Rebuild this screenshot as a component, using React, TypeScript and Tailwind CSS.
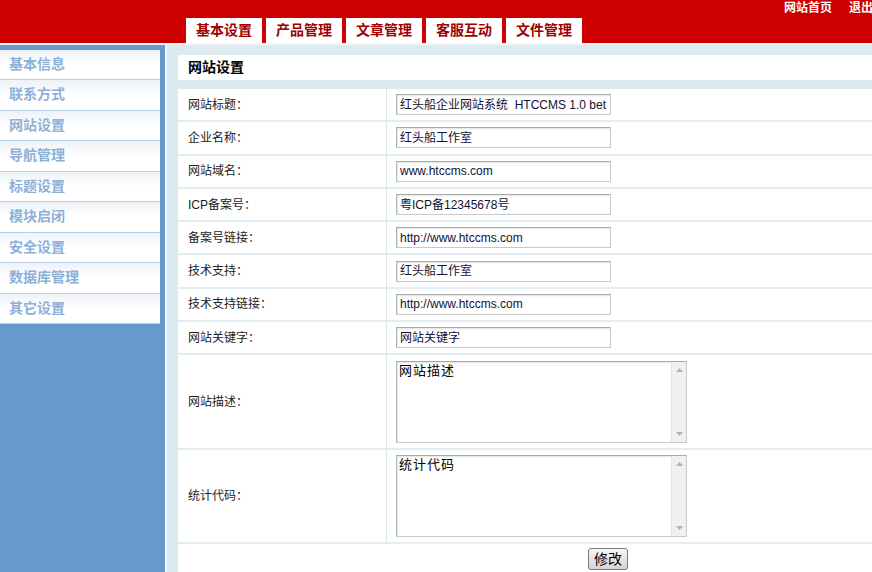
import React from "react";

const tabs = ["基本设置", "产品管理", "文章管理", "客服互动", "文件管理"];
const side = ["基本信息", "联系方式", "网站设置", "导航管理", "标题设置", "模块启闭", "安全设置", "数据库管理", "其它设置"];
const rows: [string, string][] = [
  ["网站标题：", "红头船企业网站系统  HTCCMS 1.0 bet"],
  ["企业名称：", "红头船工作室"],
  ["网站域名：", "www.htccms.com"],
  ["ICP备案号：", "粤ICP备12345678号"],
  ["备案号链接：", "http://www.htccms.com"],
  ["技术支持：", "红头船工作室"],
  ["技术支持链接：", "http://www.htccms.com"],
  ["网站关键字：", "网站关键字"],
];

function FakeTextarea({ text }: { text: string }) {
  return (
    <div className="flex w-[291px] h-[82px] border border-[#c9c9c9] border-t-[#aaaaaa] border-l-[#b5b5b5] bg-white shadow-[inset_1px_1px_2px_#e2e2e2]">
      <div className="flex-1 px-[2px] pt-[1px] text-[13px] leading-[16px] tracking-[1px] text-black">{text}</div>
      <div className="w-[15px] bg-[#f0f0f0] border-l border-[#e4e4e4] flex flex-col justify-between items-center py-[6px]">
        <svg width="7" height="4" viewBox="0 0 7 4"><path d="M0 4 L3.5 0 L7 4 Z" fill="#b0b0b0" /></svg>
        <svg width="7" height="4" viewBox="0 0 7 4"><path d="M0 0 L3.5 4 L7 0 Z" fill="#b0b0b0" /></svg>
      </div>
    </div>
  );
}

export default function App() {
  const font = { fontFamily: '"Liberation Sans", Arial, "Noto Sans CJK SC", sans-serif' };
  return (
    <div className="h-screen overflow-hidden flex flex-col bg-white" style={font}>
      {/* header */}
      <div className="h-[43px] bg-[#cc0000] flex flex-col shrink-0">
        <div className="h-[18px] flex justify-end items-center gap-[17px] mr-[-1px] text-[12px] font-bold text-white leading-none pb-[3px]">
          <span>网站首页</span>
          <span>退出</span>
        </div>
        <div className="flex gap-[4px] ml-[186px] h-[25px]">
          {tabs.map((t) => (
            <div key={t} className="w-[76px] h-[25px] bg-white flex items-center justify-center text-[14px] font-bold text-[#a00000]">
              {t}
            </div>
          ))}
        </div>
      </div>
      <div className="h-[2px] bg-[#eef4f8] shrink-0" />
      {/* body */}
      <div className="flex flex-1 min-h-0">
        <div className="w-[165px] bg-[#6699cc] pt-[5px] shrink-0">
          <div className="w-[160px]">
            {side.map((s, i) => (
              <div
                key={s}
                className={`${i === 0 ? "h-[30px]" : "h-[30.5px]"} border-b border-[#b8d1ea] bg-gradient-to-b from-[#edf2f7] via-white to-white flex items-center pl-[9px] text-[14px] font-bold text-[#8cb0d8]`}
              >
                {s}
              </div>
            ))}
          </div>
        </div>
        <div className="w-[2px] bg-[#f4f7f9] shrink-0" />
        <div className="flex-1 bg-[#dcebf0] pl-[11px] pt-[10px] overflow-hidden">
          <div className="w-[860px]">
            <div className="h-[25px] bg-white flex items-center pl-[10px] text-[14px] font-bold text-black">网站设置</div>
            <div className="h-[9px]" />
            <div className="bg-white">
              {rows.map(([l, v]) => (
                <div key={l} className="h-[33.3px] flex border-b-2 border-[#e3eef2]">
                  <div className="w-[209px] border-r border-[#d8e7ee] flex items-center pl-[10px] text-[12px] text-[#222]">{l}</div>
                  <div className="flex items-center pl-[9px]">
                    <div className="w-[215px] h-[21px] border border-[#c9c9c9] border-t-[#aaaaaa] border-l-[#b5b5b5] shadow-[inset_1px_1px_2px_#e2e2e2] flex items-center pl-[3px] overflow-hidden whitespace-pre text-[12px] text-[#111133]">
                      {v}
                    </div>
                  </div>
                </div>
              ))}
              <div className="h-[95px] flex border-b-2 border-[#e3eef2]">
                <div className="w-[209px] border-r border-[#d8e7ee] flex items-center pl-[10px] text-[12px] text-[#222]">网站描述：</div>
                <div className="flex items-center pl-[9px]">
                  <FakeTextarea text="网站描述" />
                </div>
              </div>
              <div className="h-[94px] flex border-b-2 border-[#e3eef2]">
                <div className="w-[209px] border-r border-[#d8e7ee] flex items-center pl-[10px] text-[12px] text-[#222]">统计代码：</div>
                <div className="flex items-center pl-[9px]">
                  <FakeTextarea text="统计代码" />
                </div>
              </div>
              <div className="h-[40px] flex justify-center pt-[4px]">
                <button className="h-[22px] px-[5px] border border-[#7a7a7a] rounded-[3px] bg-gradient-to-b from-[#f6f6f6] to-[#d4d4d4] text-[14px] leading-none text-black">
                  修改
                </button>
              </div>
            </div>
          </div>
        </div>
      </div>
    </div>
  );
}
